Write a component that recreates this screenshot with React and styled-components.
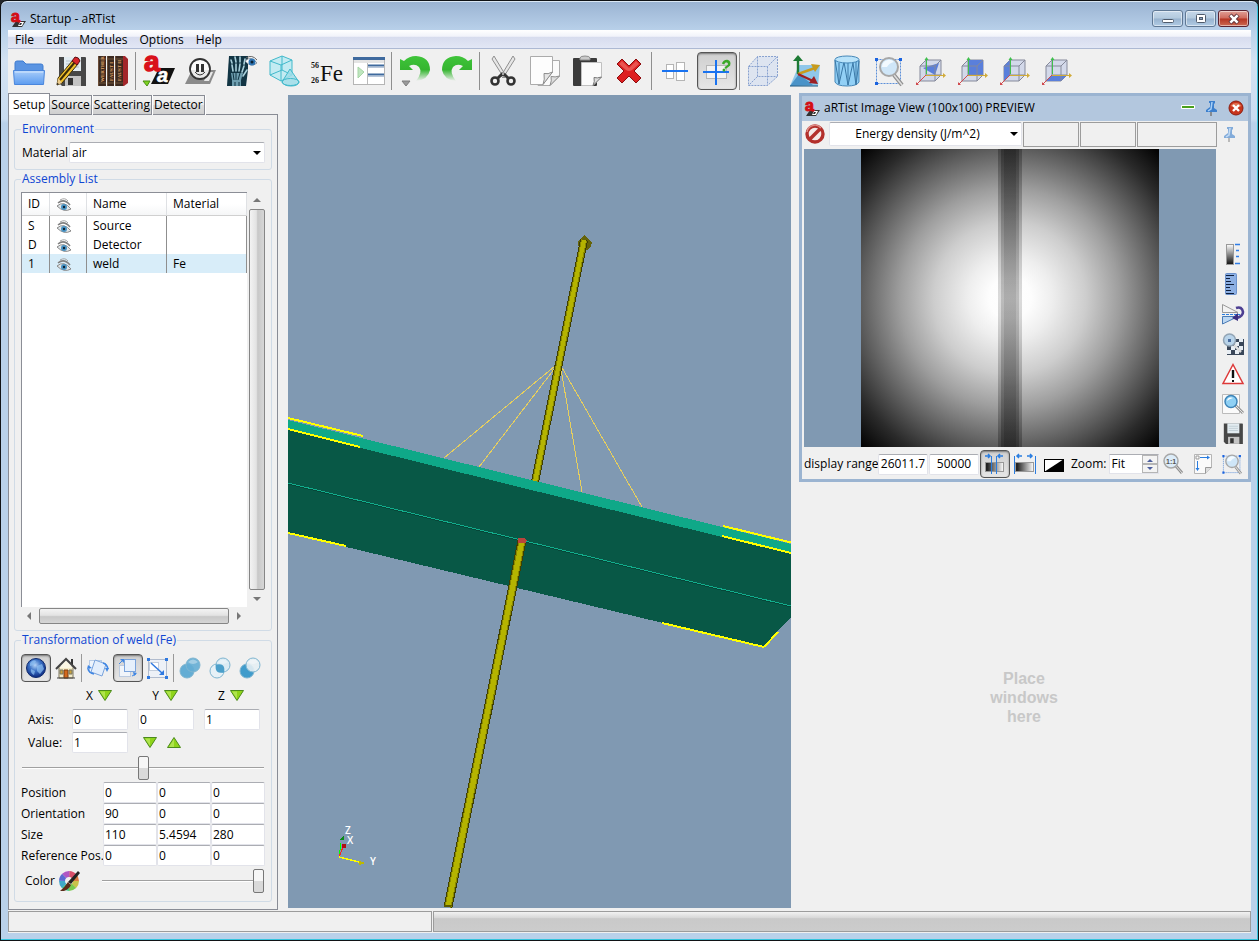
import React, { useState } from "react";
import styled, { createGlobalStyle } from "styled-components";

const App = () => {
  return (
    <>
      <GlobalStyle />
      <Frame>
        <TitleBar>
          <Logo size={16} />
          <WindowTitle>Startup - aRTist</WindowTitle>
          <WindowButtons>
            <WindowButton aria-label="Minimize">
              <svg width="14" height="12" viewBox="0 0 14 12">
                <rect x="1.5" y="6.5" width="11" height="3" rx="1" fill="#fff" stroke="#4f5b6b" />
              </svg>
            </WindowButton>
            <WindowButton aria-label="Maximize">
              <svg width="14" height="12" viewBox="0 0 14 12">
                <rect x="2.5" y="1.5" width="9" height="8" rx="1" fill="#fff" stroke="#4f5b6b" />
                <rect x="5.5" y="4.5" width="3" height="2" fill="#8aa3bf" stroke="#4f5b6b" />
              </svg>
            </WindowButton>
            <WindowButton aria-label="Close" $danger>
              <svg width="14" height="12" viewBox="0 0 14 12">
                <path d="M3 2l8 8M11 2l-8 8" stroke="#5b3038" strokeWidth="4.4" />
                <path d="M3.4 2.4l7.2 7.2M10.6 2.4l-7.2 7.2" stroke="#fff" strokeWidth="2.6" />
              </svg>
            </WindowButton>
          </WindowButtons>
        </TitleBar>
        <MenuBar>
          {["File", "Edit", "Modules", "Options", "Help"].map((item) => (
            <MenuItem key={item}>{item}</MenuItem>
          ))}
        </MenuBar>
        <MainToolbar />
        <Body>
          <SidePanel />
          <Viewport>
            <Scene />
          </Viewport>
          <RightColumn>
            <ImageView />
            <Placeholder>
              Place
              <br />
              windows
              <br />
              here
            </Placeholder>
          </RightColumn>
        </Body>
        <StatusBar>
          <StatusCell />
          <ProgressCell />
        </StatusBar>
      </Frame>
    </>
  );
};

const toolGroups = [
  [
    { name: "Open", icon: <FolderIcon /> },
    { name: "Save", icon: <SaveAsIcon /> },
    { name: "Library", icon: <BooksIcon /> },
  ],
  [
    { name: "Run", icon: <RunIcon /> },
    { name: "Pause", icon: <PauseIcon /> },
    { name: "Radiograph", icon: <XrayIcon /> },
    { name: "Solids", icon: <SolidsIcon /> },
    { name: "Materials", icon: <IronIcon /> },
    { name: "Console", icon: <ConsoleIcon /> },
  ],
  [
    { name: "Undo", icon: <UndoIcon menu /> },
    { name: "Redo", icon: <UndoIcon flip /> },
  ],
  [
    { name: "Cut", icon: <CutIcon /> },
    { name: "Copy", icon: <CopyIcon /> },
    { name: "Paste", icon: <PasteIcon /> },
    { name: "Delete", icon: <DeleteIcon /> },
  ],
  [
    { name: "Align", icon: <AlignIcon /> },
    { name: "Snap", icon: <SnapIcon />, pressed: true },
  ],
  [
    { name: "Wireframe", icon: <WireCubeIcon /> },
    { name: "Axes", icon: <AxesIcon /> },
    { name: "Mesh", icon: <MeshIcon /> },
    { name: "Zoom to fit", icon: <ZoomFitIcon /> },
    { name: "View free", icon: <CubeViewIcon face="8,13 24,8 20,20" /> },
    { name: "View back", icon: <CubeViewIcon face="11,5 26,5 26,20 11,20" /> },
    { name: "View side", icon: <CubeViewIcon face="5,11 11,5 11,20 5,26" /> },
    { name: "View bottom", icon: <CubeViewIcon face="11,20 26,20 20,26 5,26" /> },
  ],
];

function MainToolbar() {
  return (
    <Toolbar>
      {toolGroups.map((group, index) => (
        <ToolGroup key={index}>
          {group.map(({ name, icon, pressed }) => (
            <ToolButton key={name} aria-label={name} $pressed={pressed}>
              {icon}
            </ToolButton>
          ))}
        </ToolGroup>
      ))}
    </Toolbar>
  );
}

const objects = [
  { id: "S", name: "Source", material: "" },
  { id: "D", name: "Detector", material: "" },
  { id: "1", name: "weld", material: "Fe" },
];

const properties = [
  { label: "Position", values: ["0", "0", "0"] },
  { label: "Orientation", values: ["90", "0", "0"] },
  { label: "Size", values: ["110", "5.4594", "280"] },
  { label: "Reference Pos.", values: ["0", "0", "0"] },
];

function SidePanel() {
  const [tab, setTab] = useState("Setup");
  const [selected, setSelected] = useState("1");

  return (
    <Side>
      <Tabs role="tablist">
        {["Setup", "Source", "Scattering", "Detector"].map((name) => (
          <Tab
            key={name}
            role="tab"
            aria-selected={tab === name}
            $active={tab === name}
            onClick={() => setTab(name)}
          >
            {name}
          </Tab>
        ))}
      </Tabs>
      <Panel>
        <Group>
          <Legend>Environment</Legend>
          <FieldRow>
            <label htmlFor="material">Material</label>
            <Combo>
              <Select id="material" defaultValue="air">
                <option>air</option>
              </Select>
              <ComboArrow />
            </Combo>
          </FieldRow>
        </Group>

        <Group $grow>
          <Legend>Assembly List</Legend>
          <ListArea>
            <ListBox>
              <ObjectTable>
                <thead>
                  <tr>
                    <Head $width={28}>ID</Head>
                    <Head $width={37}>
                      <EyeIcon />
                    </Head>
                    <Head $width={80}>Name</Head>
                    <Head>Material</Head>
                  </tr>
                </thead>
                <tbody>
                  {objects.map(({ id, name, material }) => (
                    <ObjectRow
                      key={id}
                      $selected={selected === id}
                      onClick={() => setSelected(id)}
                    >
                      <Cell>{id}</Cell>
                      <Cell>
                        <EyeIcon />
                      </Cell>
                      <Cell>{name}</Cell>
                      <Cell>{material}</Cell>
                    </ObjectRow>
                  ))}
                </tbody>
              </ObjectTable>
            </ListBox>
            <Scrollbar $vertical>
              <ScrollButton aria-label="Scroll up">
                <Arrow points="0,5 4,1 8,5" />
              </ScrollButton>
              <Thumb $vertical />
              <ScrollButton aria-label="Scroll down">
                <Arrow points="0,1 4,5 8,1" />
              </ScrollButton>
            </Scrollbar>
            <Scrollbar>
              <ScrollButton aria-label="Scroll left">
                <Arrow points="6,-1 2,3 6,7" />
              </ScrollButton>
              <Thumb />
              <ScrollButton aria-label="Scroll right">
                <Arrow points="2,-1 6,3 2,7" />
              </ScrollButton>
            </Scrollbar>
          </ListArea>
        </Group>

        <Group>
          <Legend>Transformation of weld (Fe)</Legend>
          <SmallTools>
            <SmallButton aria-label="World" $pressed>
              <GlobeIcon />
            </SmallButton>
            <SmallButton aria-label="Home">
              <HomeIcon />
            </SmallButton>
            <Divider />
            <SmallButton aria-label="Rotate">
              <RotateIcon />
            </SmallButton>
            <SmallButton aria-label="Translate" $pressed>
              <TranslateIcon />
            </SmallButton>
            <SmallButton aria-label="Scale">
              <ScaleIcon />
            </SmallButton>
            <Divider />
            <SmallButton aria-label="Union">
              <BooleanIcon mode="union" />
            </SmallButton>
            <SmallButton aria-label="Intersection">
              <BooleanIcon mode="intersection" />
            </SmallButton>
            <SmallButton aria-label="Difference">
              <BooleanIcon mode="difference" />
            </SmallButton>
          </SmallTools>
          <AxisHeads>
            {["X", "Y", "Z"].map((axis) => (
              <AxisHead key={axis}>
                {axis}
                <GreenButton aria-label={`Set ${axis}`}>
                  <Triangle />
                </GreenButton>
              </AxisHead>
            ))}
          </AxisHeads>
          <AxisGrid>
            <span>Axis:</span>
            <Field aria-label="Axis X" defaultValue="0" />
            <Field aria-label="Axis Y" defaultValue="0" />
            <Field aria-label="Axis Z" defaultValue="1" />
            <label htmlFor="value">Value:</label>
            <Field id="value" defaultValue="1" />
            <Steppers>
              <GreenButton aria-label="Decrease">
                <Triangle />
              </GreenButton>
              <GreenButton aria-label="Increase">
                <Triangle up />
              </GreenButton>
            </Steppers>
          </AxisGrid>
          <Slider type="range" aria-label="Value slider" defaultValue="50" />
          {properties.map(({ label, values }) => (
            <PropertyRow key={label}>
              <span>{label}</span>
              {values.map((value, index) => (
                <Field
                  key={index}
                  aria-label={`${label} ${"XYZ"[index]}`}
                  defaultValue={value}
                />
              ))}
            </PropertyRow>
          ))}
          <ColorRow>
            <label htmlFor="opacity">Color</label>
            <GreenButton aria-label="Pick color">
              <ColorIcon />
            </GreenButton>
            <Slider id="opacity" type="range" defaultValue="100" />
          </ColorRow>
        </Group>
      </Panel>
    </Side>
  );
}

function ImageView() {
  return (
    <ImageWindow>
      <ImageTitle>
        <Logo size={16} />
        <ImageTitleText>aRTist Image View (100x100) PREVIEW</ImageTitleText>
        <TitleIcon aria-label="Minimize view">
          <svg width="16" height="16" viewBox="0 0 16 16">
            <rect x="1" y="5" width="14" height="4" rx="1" fill="#fff" />
            <rect x="2" y="6" width="12" height="2" fill="#49a01c" />
          </svg>
        </TitleIcon>
        <TitleIcon aria-label="Pin view">
          <PinIcon />
        </TitleIcon>
        <TitleIcon aria-label="Close view">
          <svg width="16" height="16" viewBox="0 0 16 16">
            <circle cx="8" cy="8" r="7" fill="#c8341c" stroke="#8c1d10" />
            <path d="M2.5 6a6 5 0 0 1 11 0q-5 3-11 0" fill="#e98d6a" opacity=".7" />
            <path d="M5 5l6 6M11 5l-6 6" stroke="#fff" strokeWidth="2.4" />
          </svg>
        </TitleIcon>
      </ImageTitle>
      <ModeRow>
        <ModeButton aria-label="Stop">
          <svg width="22" height="22" viewBox="0 0 22 22">
            <circle cx="11" cy="11" r="8" fill="#f4e9e8" stroke="#b3302c" strokeWidth="3.4" />
            <path d="M6 16L16 6" stroke="#b3302c" strokeWidth="3.6" />
            <path d="M3 9a8 8 0 0 1 14-4" fill="none" stroke="#dd8d88" strokeWidth="1.4" />
          </svg>
        </ModeButton>
        <Combo>
          <Select aria-label="Display quantity" $center $tall>
            <option>Energy density (J/m^2)</option>
          </Select>
          <ComboArrow />
        </Combo>
        <InfoCell $width={56} />
        <InfoCell $width={56} />
        <InfoCell $width={80} />
        <PinSlot aria-label="Pin toolbar">
          <PinIcon faded />
        </PinSlot>
      </ModeRow>
      <ImageArea>
        <ImageCanvas>
          <Radiograph />
        </ImageCanvas>
        <SideTools>
          <SideButton aria-label="Color bar">
            <GradientBarIcon />
          </SideButton>
          <SideButton aria-label="Ruler">
            <RulerIcon />
          </SideButton>
          <SideButton aria-label="Flip">
            <FlipIcon />
          </SideButton>
          <SideButton aria-label="Pixel zoom">
            <PixelIcon />
          </SideButton>
          <SideButton aria-label="Warnings">
            <WarnIcon />
          </SideButton>
          <SideButton aria-label="Inspect">
            <InspectIcon />
          </SideButton>
          <SideButton aria-label="Save image">
            <FloppyIcon />
          </SideButton>
        </SideTools>
      </ImageArea>
      <RangeRow>
        <RangeLabel htmlFor="range-min">display range</RangeLabel>
        <RangeField id="range-min" defaultValue="26011.7" />
        <RangeField aria-label="Range maximum" defaultValue="50000" />
        <SmallButton aria-label="Window range" $pressed>
          <WindowRangeIcon lines={[8, 13]} arrows="M2 4h5M5 2l2 2-2 2M20 4h-5M17 2l-2 2 2 2" />
        </SmallButton>
        <SmallButton aria-label="Full range">
          <WindowRangeIcon lines={[1, 22]} arrows="M9 4H4M6 2L4 4l2 2M14 4h5M17 2l2 2-2 2" />
        </SmallButton>
        <SmallButton aria-label="Invert">
          <svg width="22" height="22" viewBox="0 0 22 22">
            <rect x="1.5" y="6.5" width="19" height="12" fill="#fff" stroke="#000" />
            <path d="M1 19L21 6v13z" fill="#000" />
          </svg>
        </SmallButton>
        <ZoomLabel htmlFor="zoom">Zoom:</ZoomLabel>
        <Spin>
          <SpinInput id="zoom" defaultValue="Fit" />
          <SpinButtons>
            <SpinButton aria-label="Zoom in">
              <Arrow fill="#4c5f9e" points="1,5 4,2 7,5" />
            </SpinButton>
            <SpinButton aria-label="Zoom out">
              <Arrow fill="#4c5f9e" points="1,1 4,4 7,1" />
            </SpinButton>
          </SpinButtons>
        </Spin>
        <SmallButton aria-label="Actual size">
          <ActualSizeIcon />
        </SmallButton>
        <SmallButton aria-label="Fit page">
          <PageSizeIcon />
        </SmallButton>
        <SmallButton aria-label="Fit view">
          <ZoomFitIcon size={22} />
        </SmallButton>
      </RangeRow>
    </ImageWindow>
  );
}

/* 3D scene */

function Scene() {
  return (
    <SceneSvg
      viewBox="0 0 503 813"
      preserveAspectRatio="xMidYMid slice"
      shapeRendering="crispEdges"
    >
      <g stroke="#e8cf5c" strokeWidth="1" fill="none">
        <path d="M267 271L156 363M267 273L191 372M273 274L294 397M273 271L354 412" />
      </g>
      <path d="M290 146l6-6 8 7-1 4-4 4-8 0z" fill="#66640a" />
      <Rod x1={296} y1={145} x2={247} y2={387} width={8} />
      <path d="M0 334L503 458V522L475 552L0 438z" fill="#085846" />
      <path d="M0 325L503 449V459L0 335z" fill="#0fa888" />
      <path d="M0 389L503 512" stroke="#04372c" strokeWidth="1" opacity="0.5" />
      <path d="M0 388L503 511" stroke="#12ad8c" strokeWidth="1" />
      <path
        d="M0 323L75 341M0 334L72 352M0 438L58 451M435 431L503 447.500M434 441L503 458M374 528L476 552M476 552L490 537"
        stroke="#ffff00"
        strokeWidth="2"
      />
      <Rod x1={234} y1={446} x2={160} y2={812} width={9} />
      <path d="M230 443h6l3 2-1 3h-8z" fill="#b8443c" />
      <path d="M156 810h8l-1 2h-7z" fill="#5a5900" />
      <path d="M51 762L53 748" stroke="#00ff00" />
      <path d="M51 762L55 752" stroke="#ff2020" />
      <path d="M51 762L71 767" stroke="#ffff00" strokeWidth="1.500" />
      <path d="M52 745l4-5 0 5z" fill="#0a8a1a" />
      <path d="M54 749h4v4h-4z" fill="#b30f0f" />
      <path d="M71 766l6 2-6 2z" fill="#bdb800" />
      <g fill="#fff" fontFamily="Open Sans, sans-serif" fontSize="10" fontWeight="600">
        <text x="57" y="739">Z</text>
        <text x="59" y="749">X</text>
        <text x="82" y="770">Y</text>
      </g>
    </SceneSvg>
  );
}

function Rod({ x1, y1, x2, y2, width }) {
  return (
    <g>
      <path d={`M${x1} ${y1}L${x2} ${y2}`} stroke="#3f3e00" strokeWidth={width} />
      <path d={`M${x1} ${y1}L${x2} ${y2}`} stroke="#8b8a00" strokeWidth={width - 2} />
      <path d={`M${x1} ${y1}L${x2} ${y2}`} stroke="#b5b400" strokeWidth={width - 4} />
    </g>
  );
}

function Radiograph() {
  return (
    <svg width="298" height="298" viewBox="0 0 298 298">
      <defs>
        <radialGradient id="beam" cx="149" cy="149" r="211" gradientUnits="userSpaceOnUse">
          <stop offset="0" stopColor="#fff" />
          <stop offset="0.1" stopColor="#fdfdfd" />
          <stop offset="0.2" stopColor="#eeeeee" />
          <stop offset="0.36" stopColor="#cdcdcd" />
          <stop offset="0.52" stopColor="#9e9e9e" />
          <stop offset="0.7" stopColor="#5f5f5f" />
          <stop offset="0.85" stopColor="#2a2a2a" />
          <stop offset="1" stopColor="#000" />
        </radialGradient>
        <linearGradient id="seam" x1="0" x2="0" y1="0" y2="1">
          <stop offset="0" stopOpacity="0.27" />
          <stop offset="0.5" stopOpacity="0.14" />
          <stop offset="1" stopOpacity="0.27" />
        </linearGradient>
      </defs>
      <rect width="298" height="298" fill="url(#beam)" />
      <g fill="url(#seam)">
        <rect x="137" y="0" width="24" height="298" />
        <rect x="140" y="0" width="18" height="298" />
        <rect x="143" y="0" width="12" height="298" opacity="0.6" />
      </g>
    </svg>
  );
}

/* icons */

function Icon({ size = 32, box = 32, children }) {
  return (
    <svg
      width={size}
      height={size}
      viewBox={`0 0 ${box} ${box}`}
      fill="none"
      overflow="visible"
    >
      {children}
    </svg>
  );
}

function Logo({ size }) {
  return (
    <Icon size={size} box={16}>
      <path d="M2 16l4-6h10l-4 6z" fill="#333" />
      <path d="M8 15l2-4h4l-2 4z" fill="#fff" />
      <path d="M9 14l1-2h2l-1 2z" fill="#333" />
      <text x="1" y="11" fill="#d40d14" stroke="#d40d14" strokeWidth="1" fontFamily="Liberation Sans, sans-serif" fontWeight="700" fontSize="16">
        a
      </text>
    </Icon>
  );
}

function FolderIcon() {
  return (
    <Icon>
      <defs>
        <linearGradient id="folder" x1="0" x2="0" y1="0" y2="1">
          <stop offset="0" stopColor="#a9cdfa" />
          <stop offset="1" stopColor="#5c9cf0" />
        </linearGradient>
      </defs>
      <path d="M2 8q0-2 2-2h6l3 3h15q2 0 2 2v8H2z" fill="#5a94e2" stroke="#3f7cd0" />
      <path d="M.5 15.500h31l-1 14h-29z" fill="url(#folder)" stroke="#4a86dc" />
      <path d="M2 17h28" stroke="#d5e7fd" />
    </Icon>
  );
}

function FloppyBody() {
  return (
    <>
      <path d="M4 2h26q1 0 1 1v28H7l-3-3z" fill="#474747" />
      <path d="M9 2h17v14H9z" fill="#e3ecf1" />
      <path d="M11 6h13M11 9h13M11 12h13" stroke="#b5c3cc" />
      <path d="M10 21h16v10H10z" fill="#c4c4c4" />
      <path d="M13 23h5v7h-5z" fill="#333" />
    </>
  );
}

function SaveAsIcon() {
  return (
    <Icon>
      <FloppyBody />
      <path d="M3 23L18 5l5 4L7 28l-5 2z" fill="#f2c12d" stroke="#3b2b08" />
      <path d="M5 25L20 7" stroke="#3b2b08" strokeWidth="2" />
      <path d="M17 6l3-4q4 0 5 4l-3 4z" fill="#d9262b" stroke="#5b1010" />
      <path d="M3 23l4 5-5 2z" fill="#eccb8b" />
      <path d="M2 28l2 1-2 1z" fill="#111" />
    </Icon>
  );
}

function BooksIcon() {
  return (
    <Icon>
      <path d="M25 1h3l3 3v24l-4 3h-2z" fill="#a3262a" />
      <path d="M1 1h8v30H1zM10 1h7v30h-7zM18 1h8v30h-8z" fill="#3c2a20" />
      <path d="M1.500 1v30M10.500 1v30M18.500 1v30" stroke="#6b4d38" />
      <path d="M1 4h8M10 4h7M18 4h8M1 28h8M10 28h7M18 28h8" stroke="#6f5336" />
      <g fill="#e0a468" fontFamily="Liberation Serif, serif" fontWeight="700" fontSize="5">
        <text transform="translate(7 27) rotate(-90)">WERTHER</text>
        <text transform="translate(16 26) rotate(-90)">FAUST I</text>
        <text transform="translate(24 26) rotate(-90)">FAUST II</text>
      </g>
    </Icon>
  );
}

function RunIcon() {
  return (
    <Icon>
      <path d="M8 29l8-16h16l-7 16z" fill="#111" />
      <text x="14" y="27" fill="#fff" stroke="#fff" strokeWidth="0.5" fontFamily="Liberation Sans, sans-serif" fontStyle="italic" fontWeight="700" fontSize="20">
        a
      </text>
      <text x="1" y="16" fill="#d9111b" stroke="#d9111b" strokeWidth="1.500" fontFamily="Liberation Sans, sans-serif" fontWeight="700" fontSize="28">
        a
      </text>
      <path d="M0 26h7l-3 5z" fill="#7ed321" stroke="#4a8f12" />
    </Icon>
  );
}

function PauseIcon() {
  return (
    <Icon>
      <path d="M0 29l7-14h24l-6 14z" fill="#8b8b8b" />
      <path d="M19 26l4-9h5l-4 9z" fill="#e8e8e8" />
      <circle cx="15" cy="14" r="10" fill="#fff" fillOpacity="0.800" stroke="#333" strokeWidth="1.800" />
      <path d="M12.500 9v8M17.500 9v8" stroke="#333" strokeWidth="3" />
      <path d="M10 17q5 6 10 0" stroke="#333" />
    </Icon>
  );
}

function XrayIcon() {
  return (
    <Icon>
      <path d="M2 1h19v14l-2 16H0z" fill="#123544" />
      <g stroke="#a9d0db" strokeWidth="1.600" strokeLinecap="round">
        <path d="M4 5l1 3M5 10l1 6M8 2l1 5M9 9v7M13 2v5M13 9l-1 7M18 4l-1 5M17 11l-2 6M20 15l-4 6" />
      </g>
      <path d="M4 18h12l-2 7v6H5v-6z" fill="#6f9fb0" />
      <path d="M6 18l1 7M9 18v7M13 18l-2 7M8 27v4M12 27v4" stroke="#123544" />
      <path d="M18 6q6-6 12 2-6 5-12-2z" fill="#fff" stroke="#8a95a0" />
      <circle cx="25" cy="7" r="3.500" fill="#2f76b5" />
      <circle cx="25" cy="7" r="1.500" fill="#0c2233" />
      <path d="M19 3q6-4 11 2" stroke="#666" />
    </Icon>
  );
}

function SolidsIcon() {
  return (
    <Icon>
      <g stroke="#41b9cb" strokeLinejoin="round">
        <path d="M1 6l12-5 10 4v15l-11 6-11-6z" fill="#c3ebf2" />
        <path d="M1 6l11 4 11-5M12 10v16M13 1v14M1 20l12-5 10 5" />
        <path d="M21 14l9 13q-1 4-8 4t-9-4z" fill="#9fdde9" fillOpacity="0.850" />
        <ellipse cx="21.500" cy="27" rx="8.500" ry="3.500" />
      </g>
    </Icon>
  );
}

function IronIcon() {
  return (
    <Icon>
      <g fill="#111" fontFamily="Liberation Serif, serif">
        <text x="0" y="13" fontSize="8" fontWeight="700">56</text>
        <text x="0" y="28" fontSize="8" fontWeight="700">26</text>
        <text x="9" y="26" fontSize="23">Fe</text>
      </g>
    </Icon>
  );
}

function ConsoleIcon() {
  return (
    <Icon>
      <rect x="0.500" y="2.500" width="31" height="27" fill="#fff" stroke="#b5b5b5" />
      <path d="M0 2h32v3H0z" fill="#3f6a9e" />
      <path d="M1 5h30v3H1z" fill="#e4e4e4" />
      <path d="M14.500 8v21" stroke="#bbb" />
      <path d="M15 10.500h16M15 19.500h16" stroke="#3f6a9e" strokeWidth="2" />
      <path d="M15 12.500h16M15 21.500h16" stroke="#b7c5d8" />
      <path d="M5 12l6 5-6 6z" fill="#bfe6be" stroke="#a6d4a6" />
    </Icon>
  );
}

function UndoIcon({ flip, menu }) {
  const id = flip ? "redo-fill" : "undo-fill";
  return (
    <Icon>
      <defs>
        <linearGradient id={id} x1="0" x2="0" y1="0" y2="1">
          <stop offset="0" stopColor="#3fc43a" />
          <stop offset="0.550" stopColor="#35b530" />
          <stop offset="1" stopColor="#35b530" stopOpacity="0" />
        </linearGradient>
      </defs>
      <path
        transform={flip ? "translate(32 0) scale(-1 1)" : undefined}
        d="M1 4v11h13l-4-4q6-3 10 1 4 5-3 14 12-1 14-11 0-13-14-14-7 0-12 5z"
        fill={`url(#${id})`}
      />
      {menu && <path d="M3 26h8l-4 5z" fill="#9a9a9a" stroke="#7d7d7d" />}
    </Icon>
  );
}

function CutIcon() {
  return (
    <Icon>
      <path d="M7 1l12 20-2 2L5 4zM26 1L14 21l2 2L28 4z" fill="#e6e6e6" stroke="#8f8f8f" />
      <circle cx="8" cy="26" r="3.500" stroke="#333" strokeWidth="2.600" />
      <circle cx="24" cy="26" r="3.500" stroke="#333" strokeWidth="2.600" />
      <path d="M11 23l4-4 2 1M21 23l-4-4" stroke="#333" strokeWidth="3" />
      <circle cx="16" cy="19" r="1" fill="#ccc" />
    </Icon>
  );
}

function CopyIcon() {
  return (
    <Icon>
      <path d="M9 5.500h21.500V21L21 30.500H9z" fill="#fafafa" stroke="#ababab" />
      <path d="M21 30.500q2-5 1-9 4 1 8.500-.5z" fill="#ddd" stroke="#8d8d8d" />
      <path d="M1.500 1.500h22V17L14 29.500H1.500z" fill="#fdfdfd" stroke="#ababab" />
      <path d="M14 29.500q2-5 1-11 4 1 8.500-1.500z" fill="#e5e5e5" stroke="#8d8d8d" />
    </Icon>
  );
}

function PasteIcon() {
  return (
    <Icon>
      <rect x="2" y="3" width="24" height="28" rx="1" fill="#3b3b3b" />
      <path d="M9 5V3q0-2 5-2t5 2v2z" fill="#c9c9c9" stroke="#8d8d8d" />
      <path d="M10.500 7.500h20V22L22 30.500H10.500z" fill="#fbfbfb" stroke="#c0c0c0" />
      <path d="M22 30.500q2-4 1-8 3 1 7.500-.5z" fill="#ddd" stroke="#777" />
    </Icon>
  );
}

function DeleteIcon() {
  return (
    <Icon>
      <path
        d="M9 4l7 7 7-7 5 5-7 7 7 7-5 5-7-7-7 7-5-5 7-7-7-7z"
        fill="#dd1f21"
        stroke="#8d0c0e"
        strokeLinejoin="round"
      />
      <path d="M9 6l7 7 7-7 3 3-7 6q-3 2-6 0L6 9z" fill="#ef6b66" opacity="0.700" />
    </Icon>
  );
}

function AlignIcon() {
  return (
    <Icon>
      <rect x="7.500" y="9.500" width="7" height="14" fill="#fff" stroke="#b5b5b5" />
      <rect x="17.500" y="7.500" width="8" height="18" fill="#fff" stroke="#b5b5b5" />
      <path d="M3 16h26" stroke="#1a73f0" strokeWidth="2" />
    </Icon>
  );
}

function SnapIcon() {
  return (
    <Icon>
      <rect x="5.500" y="10.500" width="20" height="13" fill="#f2f2f2" stroke="#b5b5b5" />
      <path d="M2 17h26M15 5v25" stroke="#1a73f0" strokeWidth="2" />
      <path d="M22 9q1-3 4-3 3 1 2 4-2 2-4 3" stroke="#3aa828" strokeWidth="2.400" />
      <circle cx="23" cy="15" r="1.500" fill="#3aa828" />
    </Icon>
  );
}

function WireCubeIcon() {
  return (
    <Icon>
      <g stroke="#87a1cf" strokeDasharray="2 1">
        <path d="M1.500 11.500l9-10h20v20l-10 9h-19z" fill="#dde4f0" />
        <path d="M1.500 11.500h19l10-10M20.500 11.500v19M10.500 1.500v20h20M10.500 21.500l-9 9" />
      </g>
    </Icon>
  );
}

function AxesIcon() {
  return (
    <Icon>
      <path d="M10 10h21l-2 21H1z" fill="#8fc7ea" />
      <path d="M1 31l9-12 14 11z" fill="#4a93c8" />
      <path d="M1 31h28" stroke="#1b5680" />
      <path d="M9 19V4" stroke="#1d7a34" strokeWidth="2.400" />
      <path d="M4 6l5-6 5 6z" fill="#1d7a34" />
      <path d="M9 19l17-6" stroke="#c79b1e" strokeWidth="2.400" />
      <path d="M22 9l9 1-5 7z" fill="#c79b1e" />
      <path d="M9 19l15 7" stroke="#9e1f22" strokeWidth="2.400" />
      <path d="M25 21l4 8-9-1z" fill="#9e1f22" />
    </Icon>
  );
}

function MeshIcon() {
  return (
    <Icon>
      <path d="M4 5v22q2 4 12 4t12-4V5z" fill="#92d0f6" stroke="#4587b8" />
      <path d="M4 5l4 24 5-22 4 23 5-22 3 22 3-24M8 29V8M17 30V8M25 29V7" stroke="#3b78a6" />
      <ellipse cx="16" cy="4.500" rx="12" ry="3.500" fill="#b9e3fa" stroke="#4587b8" />
    </Icon>
  );
}

function ZoomFitIcon({ size = 32 }) {
  return (
    <Icon size={size}>
      <rect x="3.500" y="4.500" width="24" height="24" stroke="#5b8fd9" strokeDasharray="2 1" />
      <path d="M2 3h3v3H2zM26 3h3v3h-3zM2 27h3v3H2z" fill="#1a63e0" />
      <path d="M21 20l8 10" stroke="#8f8f8f" strokeWidth="4" />
      <path d="M21 20l8 10" stroke="#dedede" strokeWidth="1.600" />
      <circle cx="16" cy="12" r="9" fill="#cfe6f8" stroke="#a7a7a7" strokeWidth="2" />
      <path d="M9 12a7 7 0 0 1 12-5q-5 1-7 5z" fill="#f3faff" />
    </Icon>
  );
}

function CubeViewIcon({ face }) {
  return (
    <Icon>
      <path d="M5 11l6-6h15v15l-6 6H5z" fill="#d3d9ea" stroke="#85899a" />
      <polygon points={face} fill="#5a7fdb" />
      <path d="M5 11h15v15M20 11l6-6M11 5v15h15M11 20l-6 6" stroke="#85899a" />
      <path d="M11.500 19V3" stroke="#3fbf4d" />
      <path d="M9.500 5l2-3 2 3z" fill="#3fbf4d" />
      <path d="M11 20.500h18" stroke="#d1ab3a" />
      <path d="M28 18l3 2.500-3 2.500z" fill="#d1ab3a" />
      <path d="M11 20l-9 9" stroke="#d04a4e" />
      <path d="M1 27l3 3H1z" fill="#d04a4e" />
    </Icon>
  );
}

function EyeIcon() {
  return (
    <Icon size={16} box={16}>
      <path d="M1 10q7-6 14 3-7 4-14-3z" fill="#e1e6e9" stroke="#8a8a8a" />
      <circle cx="8" cy="11" r="3" fill="#4a94c4" />
      <circle cx="8" cy="11" r="1.200" fill="#123" />
      <path d="M2 7q6-5 12 2" stroke="#808080" strokeWidth="1.600" />
      <path d="M4 4q5-3 8 1" stroke="#a5a5a5" />
    </Icon>
  );
}

function GlobeIcon() {
  return (
    <Icon size={22} box={22}>
      <defs>
        <radialGradient id="globe" cx="0.450" cy="0.350" r="0.600">
          <stop offset="0" stopColor="#b4d4f8" />
          <stop offset="0.500" stopColor="#3c72c6" />
          <stop offset="1" stopColor="#12338a" />
        </radialGradient>
      </defs>
      <circle cx="11" cy="11" r="9.500" fill="url(#globe)" stroke="#102a6b" />
      <path d="M5 6q3-4 6-2l-2 4-4 1zM12 9l5-2 2 5-4 5-3-3zM6 12l4 2-1 4q-4-2-3-6z" fill="#8fc0f2" opacity="0.700" />
    </Icon>
  );
}

function HomeIcon() {
  return (
    <Icon size={22} box={22}>
      <path d="M4 10h14v11H4z" fill="#f4ecc9" stroke="#7c755c" />
      <path d="M16 2h2v6h-2z" fill="#333" />
      <path d="M11 4l7 7H4z" fill="#fbf7e4" />
      <path d="M1 12L11 2l10 10" stroke="#444" strokeWidth="2" />
      <path d="M9 13h4v8H9z" fill="#d2691e" stroke="#7a3d10" />
      <path d="M5 13h3v4H5zM14 13h3v4h-3z" fill="#c9a13b" stroke="#776" />
      <path d="M2 21h18" stroke="#444" />
    </Icon>
  );
}

function RotateIcon() {
  return (
    <Icon size={22} box={22}>
      <rect x="2.500" y="3.500" width="12" height="12" fill="#eef4fc" stroke="#b6cbe6" />
      <path d="M8 3l11 4-4 12-11-4z" fill="#e3eefc" stroke="#7ba4dc" />
      <path d="M1 12q1 4 6 5M21 12q-1-5-5-6" stroke="#3f86e4" strokeWidth="1.500" />
      <path d="M0 12l1-4 4 3zM18 11h4l-2 4z" fill="#3f86e4" />
    </Icon>
  );
}

function TranslateIcon() {
  return (
    <Icon size={22} box={22}>
      <rect x="2.500" y="8.500" width="11" height="11" fill="#f1f5fa" stroke="#bccbe0" />
      <rect x="7.500" y="2.500" width="11" height="12" fill="#e6f0fc" stroke="#7ba4dc" />
      <path d="M2 7l4-4M15 19l4-2" stroke="#3f86e4" />
      <path d="M3 2h4v4zM16 15l4 1-3 3z" fill="#3f86e4" />
    </Icon>
  );
}

function ScaleIcon() {
  return (
    <Icon size={22} box={22}>
      <rect x="1.500" y="2.500" width="18" height="18" fill="#edf1f7" stroke="#7387a8" strokeDasharray="1 1" />
      <rect x="2.500" y="5.500" width="9" height="8" fill="#fff" stroke="#c3cddb" />
      <path d="M4 6l11 10" stroke="#2f79e0" strokeWidth="1.500" />
      <path d="M17 13v5h-5z" fill="#2f79e0" />
      <path d="M0 1h3v3H0zM18 1h3v3h-3zM0 19h3v3H0zM18 19h3v3h-3z" fill="#2f79e0" />
    </Icon>
  );
}

function BooleanIcon({ mode }) {
  const colors = {
    union: ["#64add4", "#64add4"],
    intersection: ["#e6f1f7", "#d7eaf4"],
    difference: ["#3f9bcb", "#e4eef3"],
  };
  const [back, front] = colors[mode];
  return (
    <Icon size={22} box={22}>
      <circle cx="8" cy="14" r="7" fill={back} stroke="#7fb5d0" />
      <circle cx="14" cy="8" r="7" fill={front} stroke="#7fb5d0" fillOpacity="0.900" />
      {mode === "intersection" && (
        <path d="M7 7.500q5-1 7 1t1 7q-5 1-7-1t-1-7z" fill="#4b9fca" />
      )}
      <path d="M9 5q5-5 10 0-5 4-10 0z" fill="#fff" opacity="0.350" />
    </Icon>
  );
}

function Triangle({ up }) {
  return (
    <svg width="14" height="11" viewBox="0 0 14 11">
      <path d={up ? "M.5 10.500L7 .5l6.500 10z" : "M.5.5l6.500 10 6.500-10z"} fill="#8fd41a" stroke="#4b8a1c" strokeLinejoin="round" />
      <path d={up ? "M7 2v8H2z" : "M2 1.500h5V9z"} fill="#c5ee70" opacity="0.600" />
    </svg>
  );
}

const wheel = ["#d8506a", "#d97a3f", "#c9c24a", "#79c94e", "#3fc28a", "#3fa9c9", "#5a6bd1", "#b057c4"];

function ColorIcon() {
  return (
    <Icon size={22} box={22}>
      {wheel.map((color, index) => (
        <circle
          key={color}
          cx="11"
          cy="11"
          r="7"
          stroke={color}
          strokeWidth="6"
          strokeDasharray="5.600 38.400"
          strokeDashoffset={-5.5 * index + 11}
        />
      ))}
      <path d="M20 1l2 2-9 11-3-2z" fill="#222" />
      <path d="M10 12l3 3q-2 4-7 6H2q5-4 8-9z" fill="#5c2c1b" />
    </Icon>
  );
}

function PinIcon({ faded }) {
  return (
    <svg width="16" height="16" viewBox="0 0 16 16" fill="none" opacity={faded ? 0.6 : 1}>
      <path d="M7 11v5" stroke="#777" strokeWidth="1.500" />
      <path d="M5 1h6v2l-1 1v4l3 2v2H2v-2l4-3V3H5z" fill="#3c7fcd" />
      <path d="M8 2L7 9l-3 2" stroke="#a9d0f7" strokeWidth="1.500" />
    </svg>
  );
}

function GradientBarIcon() {
  return (
    <Icon size={22} box={22}>
      <defs>
        <linearGradient id="bar" x1="0" x2="0" y1="0" y2="1">
          <stop offset="0" stopColor="#fff" />
          <stop offset="1" stopColor="#111" />
        </linearGradient>
      </defs>
      <rect x="4.500" y="1.500" width="7" height="20" fill="url(#bar)" stroke="#999" />
      <path d="M13 1.500h5M14 7.500h3M14 13.500h3M13 20.500h5" stroke="#2f7de6" strokeWidth="1.500" />
    </Icon>
  );
}

function RulerIcon() {
  return (
    <Icon size={22} box={22}>
      <rect x="3.500" y="0.500" width="11" height="21" rx="1" fill="#8db0e4" stroke="#6c92cc" />
      <path d="M4 2.500h8M4 5.500h4M4 8.500h5M4 11.500h8M4 14.500h4M4 17.500h5M4 20.500h8" stroke="#0f1f3d" />
    </Icon>
  );
}

function FlipIcon() {
  return (
    <Icon size={22} box={22}>
      <path d="M.5 1.500L16 9.500H.5z" fill="#f2f2f2" stroke="#999" />
      <path d="M0 11.500h18" stroke="#2a7de0" strokeDasharray="3 1" />
      <path d="M.5 21L16 13.500H.5z" fill="#bcd7f2" stroke="#4a7bb5" />
      <path d="M14 5q6-2 7 4 0 4-6 6" stroke="#4d3f92" strokeWidth="2.600" />
      <path d="M16 10v8l-6-3z" fill="#3c2e80" />
    </Icon>
  );
}

function PixelIcon() {
  return (
    <Icon size={22} box={22}>
      <path d="M5 6h17v16H5z" fill="#3a4759" />
      <path d="M9 13h4v4H9zM13 9h4v4h-4zM17 5h4v4h-4zM17 13h4v4h-4zM13 17h4v4h-4zM5 17h4v4H5z" fill="#e8eef4" />
      <path d="M12 12l7 7" stroke="#ddd" strokeWidth="2.500" />
      <circle cx="7.500" cy="7" r="6" fill="#b9d4ea" stroke="#93a5b5" strokeWidth="1.500" />
      <path d="M6 6h3v3H6z" fill="#4a6da0" />
    </Icon>
  );
}

function WarnIcon() {
  return (
    <Icon size={22} box={22}>
      <path d="M11 1.500L21 20.500H1z" fill="#fff" stroke="#dd3a3a" strokeWidth="1.500" />
      <path d="M11 7v8" stroke="#111" strokeWidth="2.400" />
      <path d="M10 17h2v2h-2z" fill="#111" />
    </Icon>
  );
}

function InspectIcon() {
  return (
    <Icon size={22} box={22}>
      <path d="M.5 1.500h17v19h-17z" fill="#fafafa" stroke="#bbb" />
      <path d="M13 12l8 8" stroke="#999" strokeWidth="3" />
      <path d="M13 12l8 8" stroke="#e5e5e5" />
      <circle cx="9" cy="8.500" r="6" fill="#8fd0f4" stroke="#3d84b8" strokeWidth="1.500" />
      <path d="M5 8a4 4 0 0 1 6-3q-4 1-6 3z" fill="#fff" />
    </Icon>
  );
}

function FloppyIcon() {
  return (
    <Icon size={24} box={34}>
      <FloppyBody />
    </Icon>
  );
}

function WindowRangeIcon({ lines, arrows }) {
  const id = `ramp-${lines[0]}`;
  return (
    <Icon size={24} box={24}>
      <defs>
        <linearGradient id={id} x1="0" x2="1" y1="0" y2="0">
          <stop offset="0.100" stopColor="#222" />
          <stop offset="1" stopColor="#fff" />
        </linearGradient>
      </defs>
      <rect x="2.500" y="10.500" width="18" height="9" fill={`url(#${id})`} stroke="#999" />
      {lines.map((x) => (
        <path key={x} d={`M${x + 0.5} 4v18`} stroke="#2a7de0" />
      ))}
      <path d={arrows} stroke="#2a7de0" strokeWidth="1.500" />
    </Icon>
  );
}

function ActualSizeIcon() {
  return (
    <Icon size={22} box={22}>
      <path d="M14 13l6 7" stroke="#8f8f8f" strokeWidth="3" />
      <path d="M14 13l6 7" stroke="#e0e0e0" />
      <circle cx="9" cy="8" r="7" fill="#dcecf8" stroke="#a7a7a7" strokeWidth="1.500" />
      <text x="4" y="11" fill="#555" fontFamily="Liberation Sans, sans-serif" fontWeight="700" fontSize="7">
        1:1
      </text>
    </Icon>
  );
}

function PageSizeIcon() {
  return (
    <Icon size={22} box={22}>
      <path d="M2.500 1.500h17v13l-6 6h-11z" fill="#fafafa" stroke="#b5b5b5" />
      <path d="M13.500 20.500v-6h6" stroke="#999" fill="#ddd" />
      <path d="M4 3h3v3H4z" fill="#fff" stroke="#999" />
      <path d="M8 4.500h9M5.500 8v9" stroke="#2a7de0" />
      <path d="M15 2.500l3 2-3 2zM3.500 15l2 3 2-3z" fill="#2a7de0" />
    </Icon>
  );
}

function Arrow({ points, fill = "#777" }) {
  return (
    <svg width="8" height="6" viewBox="0 0 8 6" overflow="visible">
      <polygon points={points} fill={fill} />
    </svg>
  );
}

function ComboArrow() {
  return (
    <ComboMark>
      <Arrow fill="#000" points="0,1 4,5 8,1" />
    </ComboMark>
  );
}

/* styles */

const GlobalStyle = createGlobalStyle`
  * {
    box-sizing: border-box;
  }

  body {
    margin: 0;
    background: #23262b;
    color: #000;
    font-family: "Open Sans", "Noto Sans", sans-serif;
    font-size: 12px;
    line-height: 16px;
  }

  button,
  input,
  select {
    margin: 0;
    color: inherit;
    font: inherit;
  }

  svg {
    display: block;
    flex: none;
  }
`;

const Frame = styled.div`
  display: flex;
  flex-direction: column;
  min-height: 100vh;
  padding: 0 7px 7px;
  border: 1px solid #101316;
  border-radius: 7px 7px 0 0;
  background: linear-gradient(#9ab3d2, #b9d1ea 30px, #d3e2f2 60px, #c9dcf0 118px, #b9d1ea 122px);
  box-shadow: inset -1px -1px 0 #35c4dd, inset 0 1px 0 #dbe8f5;
`;

const TitleBar = styled.div`
  display: flex;
  align-items: center;
  height: 29px;
  padding: 6px 2px 0;
`;

const WindowTitle = styled.span`
  flex: 1;
  margin-left: 4px;
`;

const WindowButtons = styled.div`
  display: flex;
  gap: 2px;
`;

const WindowButton = styled.button`
  display: flex;
  align-items: center;
  justify-content: center;
  width: 31px;
  height: 17px;
  padding: 0;
  border: 1px solid ${(props) => (props.$danger ? "#5a2230" : "#5f7894")};
  border-radius: 3px;
  background: ${(props) =>
    props.$danger
      ? "linear-gradient(#e0a097, #cf6a5c 48%, #b53422 52%, #cc6a52)"
      : "linear-gradient(#c6d8ea, #b3cade 48%, #98b3cf 52%, #b0cbe4)"};
  box-shadow: inset 0 0 0 1px #ffffff80;
`;

const MenuBar = styled.nav`
  display: flex;
  height: 19px;
  padding-left: 1px;
  border-bottom: 1px solid #adb9d3;
  background: linear-gradient(#ffffff, #f1f3fa 35%, #d7dcee 40%, #e2e7f5);
`;

const MenuItem = styled.button`
  padding: 2px 6px 0;
  border: none;
  background: none;
`;

const Toolbar = styled.div`
  display: flex;
  padding: 3px 0;
  background: #f0f0f0;
`;

const ToolGroup = styled.div`
  display: flex;

  & + & {
    padding-left: 2px;
    margin-left: 1px;
    border-left: 1px solid #8f8f8f;
  }
`;

const ToolButton = styled.button`
  display: flex;
  align-items: center;
  justify-content: center;
  width: ${(props) => (props.$pressed ? 40 : 42)}px;
  height: 38px;
  margin: 0 ${(props) => (props.$pressed ? 1 : 0)}px;
  padding: 0;
  border: ${(props) => (props.$pressed ? "1px solid #555" : "none")};
  border-radius: 4px;
  background: ${(props) =>
    props.$pressed ? "linear-gradient(#cfcfcf, #e6e6e6)" : "none"};
  box-shadow: ${(props) => (props.$pressed ? "inset 0 1px 2px #777" : "none")};
`;

const Body = styled.div`
  flex: 1;
  display: grid;
  grid-template-columns: 270px minmax(0, 1fr) 452px;
  background: #f0f0f0;
`;

const Side = styled.div`
  display: flex;
  flex-direction: column;
`;

const Tabs = styled.div`
  display: flex;
  align-items: flex-end;
  height: 22px;
`;

const Tab = styled.button`
  position: relative;
  z-index: ${(props) => (props.$active ? 1 : 0)};
  height: ${(props) => (props.$active ? 22 : 20)}px;
  padding: 0 ${(props) => (props.$active ? 4 : 1)}px;
  border: 1px solid #898c95;
  border-width: 1px 1px ${(props) => (props.$active ? 0 : 1)}px;
  background: ${(props) =>
    props.$active ? "#fff" : "linear-gradient(#f2f2f2, #ebebeb 50%, #dcdcdc 50%, #cfcfcf)"};

  & + & {
    border-left-width: 0;
    margin-right: 1px;
    box-shadow: 1px 0 0 #fff;
  }
`;

const Panel = styled.div`
  flex: 1;
  display: flex;
  flex-direction: column;
  margin-top: -1px;
  padding: 6px 5px 7px;
  border: 1px solid #898c95;
`;

const Group = styled.fieldset`
  display: flex;
  flex-direction: column;
  flex: ${(props) => (props.$grow ? 1 : "none")};
  min-width: 0;
  margin: 0 0 1px;
  padding: 5px 6px 6px;
  border: 1px solid #d0dbe6;
  border-radius: 3px;

  &:last-child {
    margin-bottom: 0;
  }
`;

const Legend = styled.legend`
  height: 16px;
  padding: 0 1px;
  color: #0f46d3;
`;

const FieldRow = styled.div`
  display: flex;
  align-items: center;
  gap: 1px;
  padding-left: 1px;
`;

const Combo = styled.div`
  position: relative;
  flex: 1;
`;

const Select = styled.select`
  display: block;
  width: 100%;
  height: ${(props) => (props.$tall ? 24 : 21)}px;
  padding: 0 ${(props) => (props.$center ? 18 : 2)}px 0 2px;
  appearance: none;
  border: 1px solid #e2e3ea;
  border-top-color: #abadb3;
  border-radius: 2px;
  background: #fff;
  text-align-last: ${(props) => (props.$center ? "center" : "left")};
`;

const ComboMark = styled.span`
  position: absolute;
  top: 50%;
  right: 4px;
  transform: translateY(-50%);
  pointer-events: none;
`;

const ListArea = styled.div`
  flex: 1;
  display: grid;
  grid-template-columns: minmax(0, 1fr) 16px;
  grid-template-rows: minmax(0, 1fr) 16px;
  gap: 1px 2px;
`;

const ListBox = styled.div`
  border: 1px solid #8b8e96;
  border-width: 1px 0 0 1px;
  background: #fff;
`;

const ObjectTable = styled.table`
  width: 100%;
  table-layout: fixed;
  border-collapse: separate;
  border-spacing: 0;
`;

const Head = styled.th`
  width: ${(props) => (props.$width ? `${props.$width}px` : "auto")};
  height: 23px;
  padding: 0 0 0 6px;
  border-right: 1px solid #dfe1e4;
  border-bottom: 1px solid #d0d0d0;
  background: linear-gradient(#fff 50%, #f5f6f7);
  font-weight: 400;
  text-align: left;
`;

const Cell = styled.td`
  height: 19px;
  padding: 0 0 0 6px;
  border-right: 1px solid #8f8f8f;
`;

const ObjectRow = styled.tr`
  background: ${(props) => (props.$selected ? "#d8edf9" : "#fff")};
`;

const Scrollbar = styled.div`
  display: flex;
  flex-direction: ${(props) => (props.$vertical ? "column" : "row")};
  background: #f0f0f0;
`;

const ScrollButton = styled.button`
  display: flex;
  align-items: center;
  justify-content: center;
  width: 16px;
  height: 16px;
  padding: 0;
  border: none;
  background: #f0f0f0;
`;

const Thumb = styled.div`
  flex: 1;
  margin: ${(props) => (props.$vertical ? "1px 0" : "0 2px")};
  border: 1px solid #868686;
  border-radius: 2px;
  background: linear-gradient(
    ${(props) => (props.$vertical ? "to right" : "to bottom")},
    #f3f3f3,
    #e3e3e3 45%,
    #c8c8c8 55%,
    #d6d6d6
  );
`;

const SmallTools = styled.div`
  display: flex;
  align-items: center;
  padding-top: 1px;
`;

const SmallButton = styled.button`
  display: flex;
  align-items: center;
  justify-content: center;
  width: 30px;
  height: 28px;
  padding: 0;
  border: ${(props) => (props.$pressed ? "1px solid #555" : "none")};
  border-radius: 4px;
  background: ${(props) =>
    props.$pressed ? "linear-gradient(#cfcfcf, #e6e6e6)" : "none"};
  box-shadow: ${(props) => (props.$pressed ? "inset 0 1px 2px #777" : "none")};
`;

const Divider = styled.div`
  width: 2px;
  height: 28px;
  border-left: 1px solid #999;
`;

const AxisHeads = styled.div`
  display: grid;
  grid-template-columns: repeat(3, 56px);
  column-gap: 10px;
  height: 27px;
  padding-left: 50px;
`;

const AxisHead = styled.div`
  display: flex;
  align-items: center;
  justify-content: center;
  gap: 5px;
`;

const GreenButton = styled.button`
  padding: 0;
  border: none;
  background: none;
`;

const AxisGrid = styled.div`
  display: grid;
  grid-template-columns: 34px repeat(3, 56px);
  align-items: center;
  gap: 2px 10px;
  padding-left: 7px;
  white-space: nowrap;
`;

const Steppers = styled.div`
  display: flex;
  gap: 10px;
  padding-left: 5px;
`;

const Field = styled.input`
  width: 100%;
  min-width: 0;
  height: 21px;
  padding: 0 2px 1px 1px;
  border: 1px solid #e2e3ea;
  border-top-color: #abadb3;
  border-radius: 2px;
  background: #fff;
`;

const Slider = styled.input`
  flex: 1;
  min-width: 0;
  height: 29px;
  min-height: 29px;
  margin: 0 1px;
  appearance: none;
  background: none;

  &::-webkit-slider-runnable-track {
    height: 2px;
    border-top: 1px solid #a0a0a0;
    border-bottom: 1px solid #fff;
  }

  &::-webkit-slider-thumb {
    appearance: none;
    width: 11px;
    height: 24px;
    margin-top: -12px;
    border: 1px solid #777;
    border-radius: 2px;
    background: linear-gradient(#f6f6f6 50%, #d9d9d9 50%);
  }
`;

const PropertyRow = styled.div`
  display: grid;
  grid-template-columns: minmax(0, 1fr) repeat(3, 54px);
  align-items: center;
  white-space: nowrap;
`;

const ColorRow = styled.div`
  display: flex;
  align-items: center;
  gap: 3px;
  padding-left: 4px;

  & > input {
    margin-left: 19px;
  }
`;

const Viewport = styled.main`
  position: relative;
  margin: 2px 8px 2px 10px;
  overflow: hidden;
  background: #8099b2;
`;

const SceneSvg = styled.svg`
  position: absolute;
  width: 100%;
  height: 100%;
`;

const RightColumn = styled.div`
  display: flex;
  flex-direction: column;
`;

const ImageWindow = styled.section`
  border: 3px solid #9bb4d1;
  background: #f0f0f0;
`;

const ImageTitle = styled.header`
  display: flex;
  align-items: center;
  height: 25px;
  padding: 0 4px 1px 2px;
  background: #b3c7de;
`;

const ImageTitleText = styled.span`
  flex: 1;
  margin-left: 4px;
`;

const TitleIcon = styled.button`
  margin-left: 8px;
  padding: 0;
  border: none;
  background: none;
`;

const ModeRow = styled.div`
  display: flex;
  align-items: center;
  gap: 1px;
  height: 26px;
  margin-bottom: 2px;
  padding-left: 1px;
`;

const ModeButton = styled.button`
  width: 25px;
  padding: 0 1px;
  border: none;
  background: none;
`;

const InfoCell = styled.div`
  width: ${(props) => props.$width}px;
  height: 25px;
  border: 1px solid #9c9c9c;
`;

const PinSlot = styled.button`
  width: 30px;
  padding: 0 4px;
  border: none;
  background: none;
`;

const ImageArea = styled.div`
  display: flex;
  padding-left: 2px;
`;

const ImageCanvas = styled.div`
  flex: 1;
  display: flex;
  justify-content: center;
  margin-bottom: 2px;
  background: #8099b2;
`;

const SideTools = styled.div`
  display: flex;
  flex-direction: column;
  justify-content: flex-end;
  width: 32px;
`;

const SideButton = styled.button`
  display: flex;
  align-items: center;
  justify-content: center;
  height: 30px;
  padding: 0 0 0 2px;
  border: none;
  background: none;
`;

const RangeRow = styled.div`
  display: flex;
  align-items: center;
  height: 30px;
  padding: 0 1px 0 2px;
  white-space: nowrap;
`;

const RangeLabel = styled.label`
  flex: 1;
`;

const RangeField = styled(Field)`
  width: 50px;
  flex: none;
  margin-right: 1px;
  text-align: center;
`;

const ZoomLabel = styled.label`
  margin: 0 2px;
`;

const Spin = styled.div`
  display: flex;
  width: 50px;
  height: 20px;
  border: 1px solid #e2e3ea;
  border-top-color: #abadb3;
  background: #fff;
`;

const SpinInput = styled.input`
  flex: 1;
  min-width: 0;
  padding: 0 2px;
  border: none;
  background: none;
`;

const SpinButtons = styled.div`
  display: flex;
  flex-direction: column;
  width: 16px;
`;

const SpinButton = styled.button`
  flex: 1;
  display: flex;
  align-items: center;
  justify-content: center;
  padding: 0;
  border: 1px solid #b5b5b5;
  background: #f3f3f3;
`;

const Placeholder = styled.div`
  flex: 1;
  display: flex;
  align-items: center;
  justify-content: center;
  padding: 2px 2px 0 0;
  color: #c8c8c8;
  font-family: "Liberation Sans", Arial, sans-serif;
  font-size: 16px;
  font-weight: 700;
  line-height: 19px;
  text-align: center;
`;

const StatusBar = styled.footer`
  display: grid;
  grid-template-columns: minmax(0, 424fr) minmax(0, 818fr);
  gap: 1px;
  height: 23px;
  padding: 1px 0;
  background: #f0f0f0;
`;

const StatusCell = styled.div`
  border: 1px solid #9c9c9c;
`;

const ProgressCell = styled.div`
  border: 1px solid #9c9c9c;
  background: linear-gradient(#f2f2f2, #d8d8d8 30%, #c9c9c9 35%, #cccccc);
`;

export default App;
